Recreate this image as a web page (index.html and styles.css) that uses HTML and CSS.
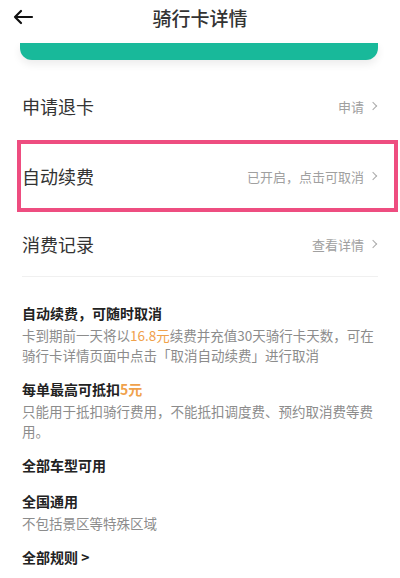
FILE: index.html
```html
<!DOCTYPE html>
<html lang="zh-CN">
<head>
    <meta charset="UTF-8">
    <meta name="viewport" content="width=device-width, initial-scale=1.0">
    <title>骑行卡详情</title>
    <link rel="stylesheet" href="styles.css">
</head>
<body>

    <div class="header">
        <svg class="back" width="22" height="16" viewBox="0 0 22 16">
            <path d="M20 8H3M9 2L3 8l6 6" fill="none" stroke="#111" stroke-width="2.2" stroke-linecap="round" stroke-linejoin="round"/>
        </svg>
        <h1>骑行卡详情</h1>
    </div>

    <div class="card-bottom"></div>

    <div class="menu">
        <div class="row">
            <span class="row-title">申请退卡</span>
            <span class="row-value">申请<i class="chev"></i></span>
        </div>
        <div class="row highlight">
            <span class="row-title">自动续费</span>
            <span class="row-value">已开启，点击可取消<i class="chev"></i></span>
        </div>
        <div class="row last">
            <span class="row-title">消费记录</span>
            <span class="row-value">查看详情<i class="chev"></i></span>
        </div>
    </div>

    <div class="rules">
        <div class="rule">
            <h3>自动续费，可随时取消</h3>
            <div class="desc">
                <div><span>卡到期前一天将以</span><span class="price">16.8元</span><span>续费并充值30天骑行卡天数，可在</span></div>
                <div>骑行卡详情页面中点击「取消自动续费」进行取消</div>
            </div>
        </div>
        <div class="rule">
            <h3>每单最高可抵扣<span class="price">5元</span></h3>
            <p class="desc">只能用于抵扣骑行费用，不能抵扣调度费、预约取消费等费用。</p>
        </div>
        <div class="rule">
            <h3>全部车型可用</h3>
        </div>
        <div class="rule">
            <h3>全国通用</h3>
            <p class="desc">不包括景区等特殊区域</p>
        </div>
        <div class="rule">
            <h3>全部规则 <span class="more">&gt;</span></h3>
        </div>
    </div>

</body>
</html>
```

FILE: styles.css
```css
body, html {
    margin: 0;
    padding: 0;
    width: 100%;
    height: 100%;
    background-color: #fff;
    font-family: "Noto Sans CJK SC", "Noto Sans", sans-serif;
    color: #333;
    overflow: hidden;
}
.header {
    height: 34px;
    display: flex;
    align-items: center;
    justify-content: center;
    position: relative;
}
.header h1 {
    margin: 0;
    font-size: 19px;
    font-weight: 500;
    color: #333;
}
.back {
    position: absolute;
    left: 12px;
    top: 9px;
}
.card-bottom {
    margin: 9px 22px 0 20px;
    height: 17px;
    background-color: #18b99a;
    border-radius: 0 0 12px 12px;
    box-shadow: 0 4px 8px rgba(0, 0, 0, 0.08);
}
.menu {
    margin-top: 12px;
}
.row {
    display: flex;
    justify-content: space-between;
    align-items: center;
    height: 68px;
    padding: 0 22px;
}
.row.highlight {
    height: 64px;
    border: 4px solid #ee4d80;
    margin: 0 2px 0 17px;
    padding: 0 16px 0 1px;
}
.row.last {
    height: 64px;
    margin: 0 22px;
    padding: 0;
    border-bottom: 1px solid #f0f0f0;
}
.row-title {
    font-size: 18px;
    color: #333;
}
.row-value {
    font-size: 13px;
    color: #a0a0a0;
    display: flex;
    align-items: center;
}
.chev {
    display: inline-block;
    width: 5px;
    height: 5px;
    border-top: 1.3px solid #aaa;
    border-right: 1.3px solid #aaa;
    transform: rotate(45deg);
    margin-left: 6px;
    margin-right: 2px;
}
.rules {
    padding: 24px 22px 0 22px;
    width: 356px;
}
.rule {
    margin-bottom: 12px;
}
.rule h3 {
    margin: 0;
    font-size: 14px;
    font-weight: 700;
    color: #222;
    line-height: 24px;
}
.desc {
    margin: 0;
    font-size: 13.5px;
    color: #8c8c8c;
    line-height: 20px;
}
.price {
    color: #f0a14b;
}
.more {
    font-weight: 700;
}
```
